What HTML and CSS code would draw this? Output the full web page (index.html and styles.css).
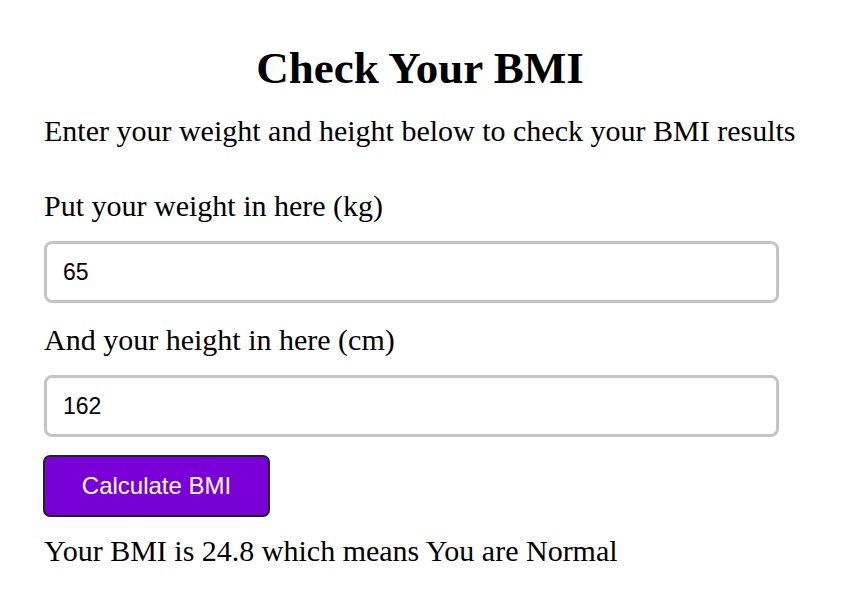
FILE: index.html
```html
<!DOCTYPE html>
<html>
<head>
<meta charset="utf-8">
<link rel="stylesheet" href="styles.css">
</head>
<body>
<div class="wrap">
  <h1 class="title">Check Your BMI</h1>
  <p class="intro">Enter your weight and height below to check your BMI results</p>
  <label class="label">Put your weight in here (kg)</label>
  <input class="field" type="text" value="65">
  <label class="label">And your height in here (cm)</label>
  <input class="field" type="text" value="162">
  <button class="btn">Calculate BMI</button>
  <p class="result">Your BMI is 24.8 which means You are Normal</p>
</div>
</body>
</html>
```
FILE: styles.css
```css
html, body { margin: 0; padding: 0; background: #fff; }
body { font-family: "Liberation Serif", "Times New Roman", serif; color: #000; }
.wrap { width: 752px; margin: 0 0 0 44px; display: flex; flex-direction: column; align-items: flex-start; }
.title { align-self: stretch; text-align: center; font-size: 45px; font-weight: bold; margin: 42px 0 0; line-height: 52px; white-space: nowrap; }
.intro { font-size: 30px; margin: 20px 0 0; line-height: 34px; white-space: nowrap; }
.label { font-size: 30px; margin-top: 41px; line-height: 34px; display: block; }
.field { width: 735px; height: 62px; box-sizing: border-box; border: 3px solid #c4c4c4; border-radius: 8px; padding: 0 16px; font-family: "Liberation Sans", Arial, sans-serif; font-size: 23px; margin-top: 18px; outline: none; color: #000; }
.field + .label { margin-top: 20px; }
.btn { margin-top: 18px; width: 227px; height: 62px; margin-left: -1px; background: #7a00d8; color: #fff; border: 2px solid #222; border-radius: 7px; font-family: "Liberation Sans", Arial, sans-serif; font-size: 24px; }
.result { font-size: 30px; margin: 17px 0 0; line-height: 34px; }
```
